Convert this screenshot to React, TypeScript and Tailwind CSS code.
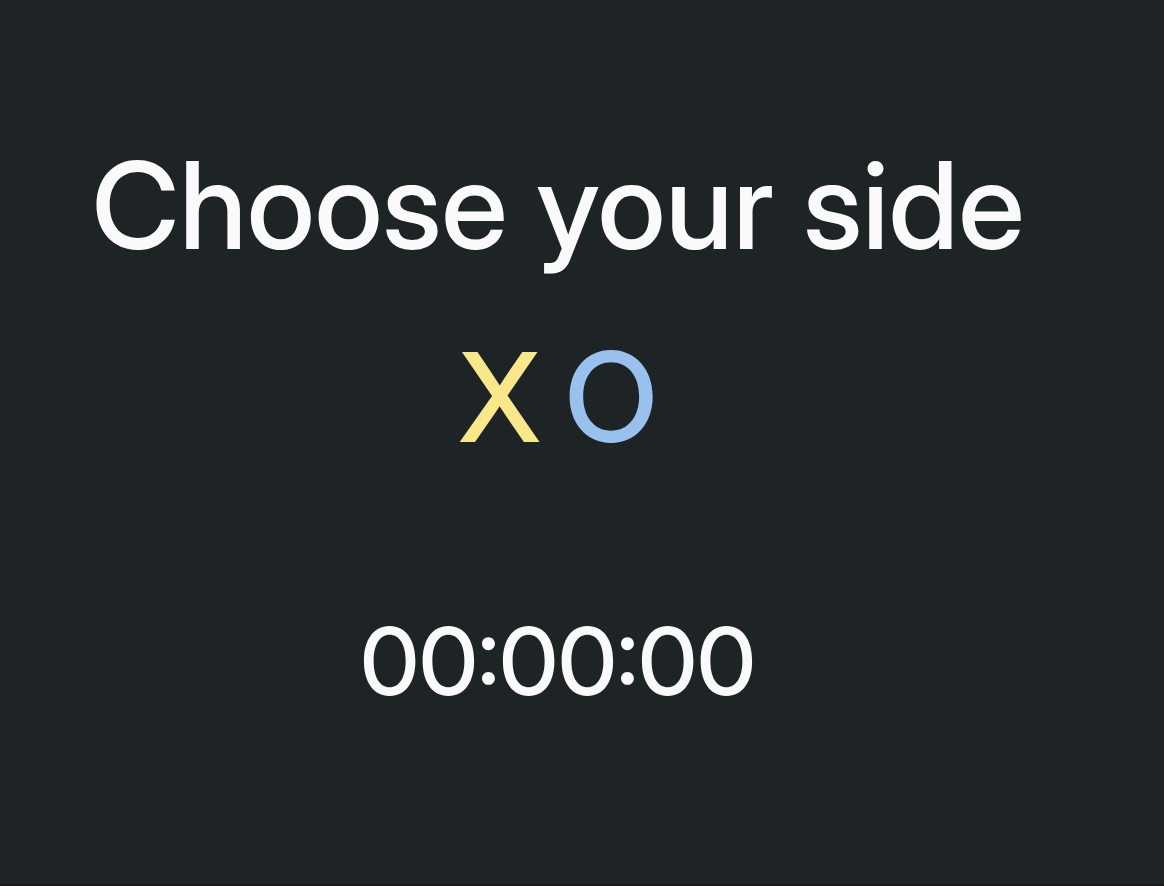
export default function App() {
  return (
    <main className="flex min-h-screen flex-col items-center border-b-2 border-[#21161f] bg-[#1e2326] pt-[125px] pr-[48px] font-['Inter_Display','Inter','Liberation_Sans',sans-serif] font-medium text-[#fafafa]">
      <h1 className="text-[121px] leading-[160px] whitespace-nowrap">Choose your side</h1>
      <div className="mt-8 flex gap-6 text-[124px] leading-[160px]">
        <button type="button" className="text-[#f9e78b]">X</button>
        <button type="button" className="text-[#98c1ee]">O</button>
      </div>
      <p className="mt-[124px] text-[94px] leading-[120px]">00:00:00</p>
    </main>
  );
}
